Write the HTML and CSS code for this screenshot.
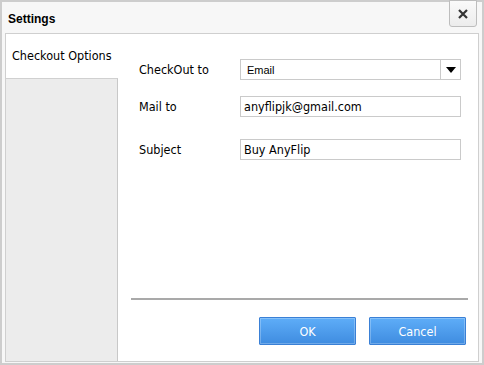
FILE: index.html
```html
<!DOCTYPE html>
<html lang="en">
<head>
    <meta charset="UTF-8">
    <title>Settings</title>
    <link rel="stylesheet" href="styles.css">
</head>
<body>
<div class="dialog">
    <div class="title-bar">
        <span class="title">Settings</span>
        <button class="close-button" type="button">
            <svg width="12" height="12" viewBox="0 0 12 12"><path d="M2 2l8 8M10 2l-8 8" stroke="#333" stroke-width="2.2"/></svg>
        </button>
    </div>
    <div class="dialog-body">
        <div class="sidebar">
            <div class="tab active">Checkout Options</div>
            <div class="tab-rest"></div>
        </div>
        <div class="content">
            <div class="form">
                <div class="form-row">
                    <label class="form-label">CheckOut to</label>
                    <div class="select-box">
                        <span class="select-value">Email</span>
                        <span class="select-arrow"></span>
                    </div>
                </div>
                <div class="form-row">
                    <label class="form-label">Mail to</label>
                    <input class="text-input" type="text" value="anyflipjk@gmail.com">
                </div>
                <div class="form-row">
                    <label class="form-label">Subject</label>
                    <input class="text-input" type="text" value="Buy AnyFlip">
                </div>
            </div>
            <div class="footer">
                <button class="dialog-button" type="button">OK</button>
                <button class="dialog-button" type="button">Cancel</button>
            </div>
        </div>
    </div>
</div>
</body>
</html>
```

FILE: styles.css
```css
* {
    box-sizing: border-box;
}

body {
    margin: 0;
    font-family: 'DejaVu Sans Condensed', 'DejaVu Sans', Verdana, sans-serif;
    font-size: 12.5px;
    color: #000;
}

.dialog {
    width: 484px;
    height: 365px;
    background: #f7f7f7;
    border: 2px solid #cdcdcd;
    display: flex;
    flex-direction: column;
}

.title-bar {
    height: 31px;
    display: flex;
    justify-content: space-between;
    align-items: flex-start;
    padding-left: 6px;
}

.title {
    font-family: 'Liberation Sans', Arial, sans-serif;
    font-weight: bold;
    font-size: 12px;
    margin-top: 10px;
}

.close-button {
    width: 28px;
    height: 27px;
    margin-right: 5px;
    margin-top: -2px;
    border: 1px solid #bdbdbd;
    border-radius: 0 0 3px 3px;
    background: linear-gradient(#fafafa, #ececec);
    display: grid;
    place-items: center;
    padding: 0;
}

.dialog-body {
    flex: 1;
    margin: 0 3px 1px 3px;
    border: 1px solid #cfcfcf;
    background: #fff;
    display: flex;
}

.sidebar {
    width: 112px;
    display: flex;
    flex-direction: column;
}

.tab {
    height: 44px;
    padding: 14px 0 0 6px;
    color: #000;
}

.tab-rest {
    flex: 1;
    background: #ececec;
    border-top: 1px solid #d0d0d0;
    border-right: 1px solid #c8c8c8;
}

.content {
    flex: 1;
    padding: 25px 10px 16px 13px;
    display: flex;
    flex-direction: column;
    justify-content: space-between;
}

.form {
    display: flex;
    flex-direction: column;
    gap: 16px;
    padding-left: 8px;
}

.form-row {
    display: flex;
    align-items: center;
    height: 21px;
}

.form-row + .form-row + .form-row {
    margin-top: 6px;
}

.form-label {
    width: 101px;
}

.select-box,
.text-input {
    width: 221px;
    height: 21px;
    border: 1px solid #cacaca;
    background: #fff;
}

.select-box {
    display: flex;
    align-items: center;
    justify-content: space-between;
}

.select-value {
    font-family: 'Liberation Sans', Arial, sans-serif;
    font-size: 11px;
    padding-left: 6px;
}

.select-arrow {
    width: 20px;
    height: 19px;
    border-left: 1px solid #cacaca;
    display: grid;
    place-items: center;
}

.select-arrow::before {
    content: "";
    border-left: 5px solid transparent;
    border-right: 5px solid transparent;
    border-top: 6px solid #000;
}

.text-input {
    font-family: 'DejaVu Sans Condensed', 'DejaVu Sans', Verdana, sans-serif;
    font-size: 12.5px;
    padding: 0 3px;
    color: #000;
    outline: none;
}

.footer {
    border-top: 2px solid #a9a9a9;
    padding: 17px 2px 0 0;
    display: flex;
    justify-content: flex-end;
    gap: 13px;
}

.dialog-button {
    width: 97px;
    height: 28px;
    border: 1px solid #3a80d6;
    border-radius: 1px;
    background: linear-gradient(#5eadf8, #3f8ce0);
    box-shadow: inset 0 0 0 1px rgba(255, 255, 255, 0.25);
    color: #fff;
    font-family: 'DejaVu Sans Condensed', 'DejaVu Sans', Verdana, sans-serif;
    font-size: 12.5px;
}
```
